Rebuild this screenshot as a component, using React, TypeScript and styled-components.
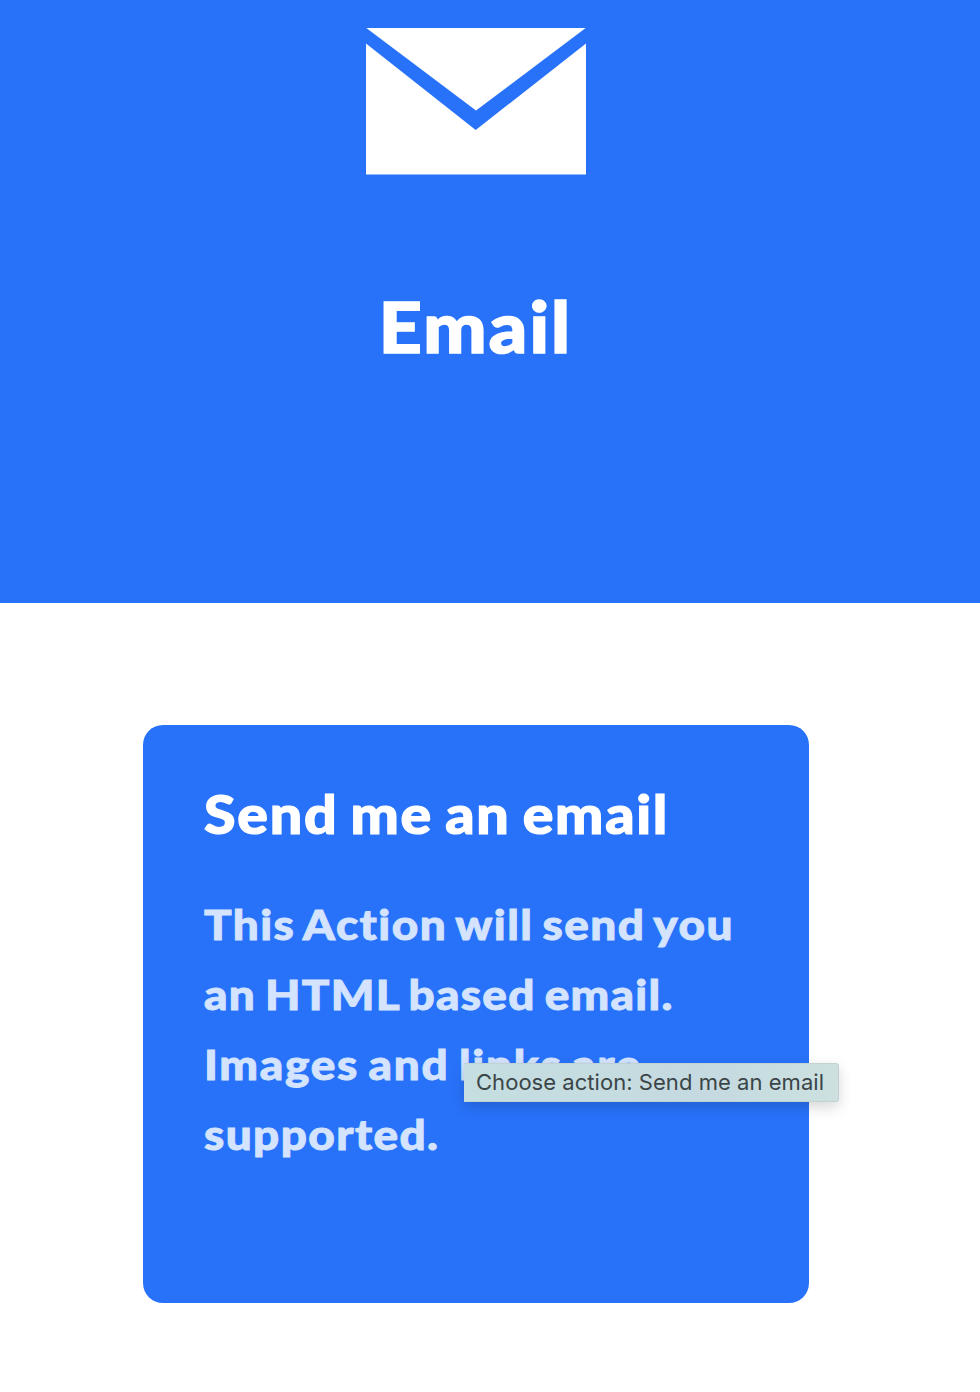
import React from "react";
import styled, { createGlobalStyle } from "styled-components";

const BLUE = "#2872fa";

const GlobalStyle = createGlobalStyle`
  *, *::before, *::after { box-sizing: border-box; }
  body { margin: 0; background: #fff; font-family: Lato, "Open Sans", sans-serif; font-variant-ligatures: none; }
`;

const Page = styled.div`
  height: 1392px;
  overflow: hidden;
  display: flex;
  flex-direction: column;
`;

const Hero = styled.header`
  height: 603px;
  padding: 28px 28px 0 0;
  background: ${BLUE};
  display: flex;
  flex-direction: column;
  align-items: center;
`;

const EnvelopeIcon = styled.svg`
  display: block;
  width: 220px;
  height: 147px;
  fill: #fff;
`;

const ServiceName = styled.h1`
  margin: 101px 0 0;
  color: #fff;
  font-size: 69.5px;
  line-height: 100px;
  font-weight: 900;
  letter-spacing: 2px;
  -webkit-text-stroke: 1.6px #fff;
  transform: scaleX(1.08);
`;

const Main = styled.main`
  padding: 122px 28px 0 0;
  display: flex;
  justify-content: center;
`;

const ActionCard = styled.article`
  position: relative;
  width: 666px;
  height: 578px;
  padding: 49px 61px;
  border-radius: 20px;
  background: ${BLUE};
`;

const ActionTitle = styled.h2`
  margin: 0;
  color: #fff;
  font-size: 53.5px;
  line-height: 78px;
  font-weight: 900;
  white-space: nowrap;
  letter-spacing: 1.65px;
  word-spacing: -3px;
  -webkit-text-stroke: 1.2px #fff;
  transform: scaleX(1.07);
  transform-origin: left;
`;

const Description = styled.p`
  margin: 37px 0 0;
  color: #d4e3fe;
  font-size: 42.5px;
  line-height: 70px;
  font-weight: 900;
  word-spacing: -3px;
  -webkit-text-stroke: 0.9px #d4e3fe;
  transform: scaleX(1.08);
  transform-origin: left;
`;

const Line = styled.span<{ $tracking: number }>`
  display: block;
  width: max-content;
  white-space: nowrap;
  letter-spacing: ${(p) => p.$tracking}px;
`;

const Tooltip = styled.div`
  position: absolute;
  left: 321px;
  top: 338px;
  width: 375px;
  height: 39px;
  padding-left: 12px;
  border: 1px solid rgba(190, 205, 205, 0.7);
  border-left: 0;
  border-radius: 0 3px 3px 0;
  background: linear-gradient(90deg, #c5dee0 0%, #c5dbe0 50%, #c5d9e1 62%, #c8dee0 85%, #cde0df 100%);
  box-shadow: 0 5px 14px rgba(0, 0, 0, 0.16);
  color: #3b4548;
  font-family: Inter, "Liberation Sans", sans-serif;
  font-size: 22px;
  line-height: 37px;
  letter-spacing: 0.04px;
  white-space: nowrap;
`;

const descriptionLines = [
  { text: "This Action will send you", tracking: 1.33 },
  { text: "an HTML based email.", tracking: 1.18 },
  { text: "Images and links are", tracking: 1.62 },
  { text: "supported.", tracking: 1.3 },
];

export default function App() {
  return (
    <Page>
      <GlobalStyle />
      <Hero>
        <EnvelopeIcon viewBox="0 0 220 147" aria-hidden="true">
          <path d="M0.3 0H219.7L110 82.5Z" />
          <path d="M0 15.5L109.7 102L220 15.5V146.6H0Z" />
        </EnvelopeIcon>
        <ServiceName>Email</ServiceName>
      </Hero>
      <Main>
        <ActionCard>
          <ActionTitle>Send me an email</ActionTitle>
          <Description>
            {descriptionLines.map((line) => (
              <Line key={line.text} $tracking={line.tracking}>
                {line.text}
              </Line>
            ))}
          </Description>
          <Tooltip role="tooltip">Choose action: Send me an email</Tooltip>
        </ActionCard>
      </Main>
    </Page>
  );
}
